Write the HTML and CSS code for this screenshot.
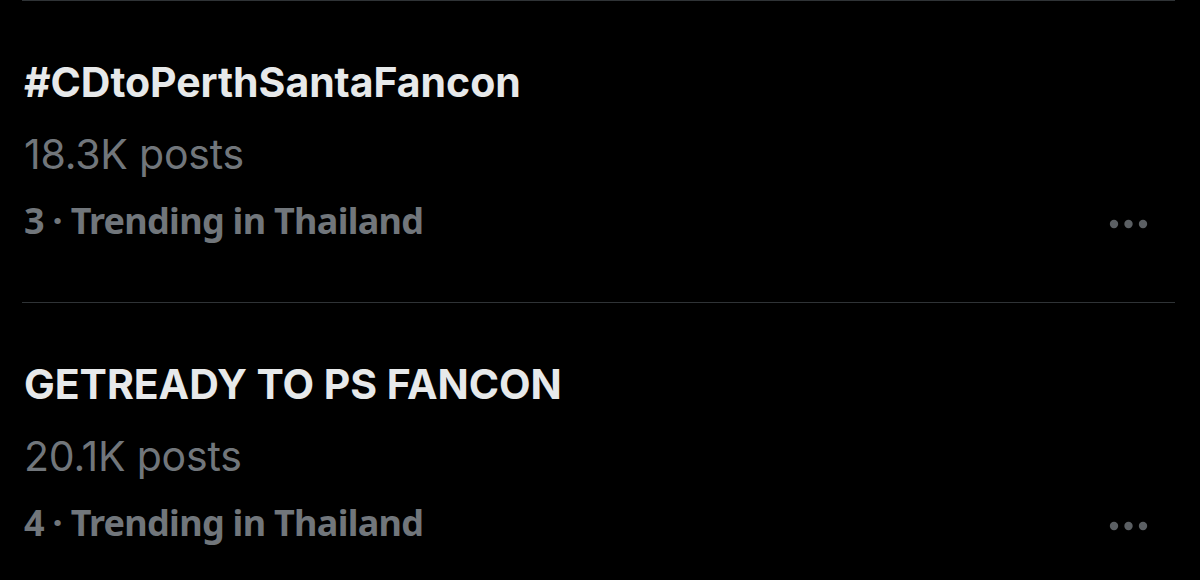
FILE: index.html
```html
<!DOCTYPE html>
<html>
<head>
<meta charset="utf-8">
<link rel="stylesheet" href="styles.css">
</head>
<body>
<div class="list">
  <div class="item">
    <div class="title">#CDtoPerthSantaFancon</div>
    <div class="posts">18.3K posts</div>
    <div class="meta-row">
      <div class="meta">3 · Trending in Thailand</div>
      <svg class="more" width="40" height="10" viewBox="0 0 40 10"><circle cx="5" cy="5" r="4.2"/><circle cx="19.5" cy="5" r="4.2"/><circle cx="34" cy="5" r="4.2"/></svg>
    </div>
  </div>
  <div class="item">
    <div class="title">GETREADY TO PS FANCON</div>
    <div class="posts">20.1K posts</div>
    <div class="meta-row">
      <div class="meta">4 · Trending in Thailand</div>
      <svg class="more" width="40" height="10" viewBox="0 0 40 10"><circle cx="5" cy="5" r="4.2"/><circle cx="19.5" cy="5" r="4.2"/><circle cx="34" cy="5" r="4.2"/></svg>
    </div>
  </div>
</div>
</body>
</html>
```
FILE: styles.css
```css
html, body {
  margin: 0;
  padding: 0;
  background: #000;
  height: 100%;
  overflow: hidden;
}
.list {
  padding: 0 25px 0 22px;
}
.item {
  border-top: 1px solid #2f3336;
  padding: 56px 0 59px 2px;
  display: flex;
  flex-direction: column;
}
.title {
  font-family: Inter, "Liberation Sans", sans-serif;
  font-weight: 700;
  font-size: 41px;
  line-height: 50px;
  color: #e7e9ea;
  letter-spacing: -0.05px;
}
.posts {
  font-family: Inter, "Liberation Sans", sans-serif;
  font-weight: 400;
  font-size: 41px;
  line-height: 50px;
  margin-top: 22px;
  color: #71767b;
  letter-spacing: -0.2px;
}
.meta-row {
  display: flex;
  justify-content: space-between;
  align-items: center;
  margin-top: 20px;
  padding-right: 26px;
}
.meta {
  font-family: "Noto Sans", "Liberation Sans", sans-serif;
  font-weight: 700;
  font-size: 36px;
  line-height: 44px;
  color: #71767b;
  letter-spacing: -0.7px;
}
.more {
  fill: #5b5f63;
  display: block;
  margin-top: 5px;
}
```
